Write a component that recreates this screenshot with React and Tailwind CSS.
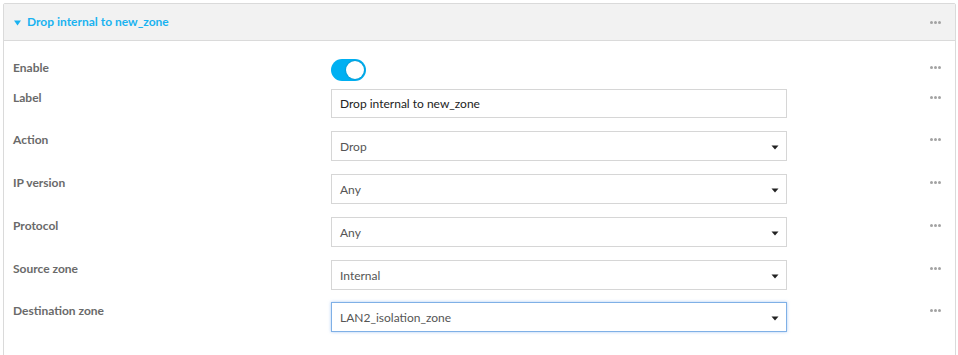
import React from "react";

const font = { fontFamily: "Lato, 'Open Sans', 'Liberation Sans', sans-serif" };

function Dots() {
  return (
    <div className="flex gap-px items-center h-4 pt-px">
      <span className="w-[3px] h-[3px] rounded-full bg-[#a3a3a3]" />
      <span className="w-[3px] h-[3px] rounded-full bg-[#a3a3a3]" />
      <span className="w-[3px] h-[3px] rounded-full bg-[#a3a3a3]" />
    </div>
  );
}

function Caret() {
  return (
    <svg width="8" height="5" viewBox="0 0 8 5" className="block">
      <path d="M0.5 0.5 H7.5 L4 4.5 Z" fill="#222" />
    </svg>
  );
}

function Row({ label, children, className = "" }) {
  return (
    <div className={"flex items-start " + className}>
      <div className="w-[327px] pl-[9px] pt-px text-[12px] leading-4 font-bold text-[#6a6a6a]">
        {label}
      </div>
      <div className="w-[456px]">{children}</div>
      <div className="ml-auto pr-[14px]">
        <Dots />
      </div>
    </div>
  );
}

function Select({ value, focused }) {
  return (
    <div
      className={
        "h-[30px] flex items-center justify-between pl-[8px] pr-[7px] bg-white border text-[12px] text-[#555] " +
        (focused
          ? "border-[#7fb0e6] shadow-[0_0_3px_rgba(102,160,233,0.55)]"
          : "border-[#d6d6d6]")
      }
    >
      <span className="pt-[2px]">{value}</span>
      <span className="pt-[2px]">
        <Caret />
      </span>
    </div>
  );
}

export default function App() {
  return (
    <div className="w-[958px] h-[355px] bg-white overflow-hidden" style={font}>
      <div className="ml-[3px] mt-[3px] w-[953px] h-[355px] border border-[#dadada] rounded-[2px]">
        <div className="h-[37px] bg-[#f2f2f2] border-b border-[#dadada] flex items-center pl-[10px] pr-[14px]">
          <svg width="7" height="6" viewBox="0 0 7 6" className="mr-[6px] mt-px">
            <path d="M0 0.5 H7 L3.5 5.5 Z" fill="#1ab2f0" />
          </svg>
          <span className="text-[12px] font-bold text-[#1ab2f0] leading-4">
            Drop internal to new_zone
          </span>
          <div className="ml-auto">
            <Dots />
          </div>
        </div>
        <div className="pt-[18px]">
          <Row label="Enable">
            <div className="w-[35px] h-[22px] rounded-full bg-[#00b0f2] flex items-center justify-end pr-[2px]">
              <div className="w-[18px] h-[18px] rounded-full bg-white shadow-[0_0_2px_rgba(0,0,0,0.3)]" />
            </div>
          </Row>
          <Row label="Label" className="mt-[8px]">
            <div className="h-[29px] flex items-center pl-[8px] bg-white border border-[#d6d6d6] text-[12px] text-[#222]">
              <span className="pt-px">Drop internal to new_zone</span>
            </div>
          </Row>
          <Row label="Action" className="mt-[13px]">
            <Select value="Drop" />
          </Row>
          <Row label="IP version" className="mt-[13px]">
            <Select value="Any" />
          </Row>
          <Row label="Protocol" className="mt-[13px]">
            <Select value="Any" />
          </Row>
          <Row label="Source zone" className="mt-[13px]">
            <Select value="Internal" />
          </Row>
          <Row label="Destination zone" className="mt-[12px]">
            <Select value="LAN2_isolation_zone" focused />
          </Row>
        </div>
      </div>
    </div>
  );
}
